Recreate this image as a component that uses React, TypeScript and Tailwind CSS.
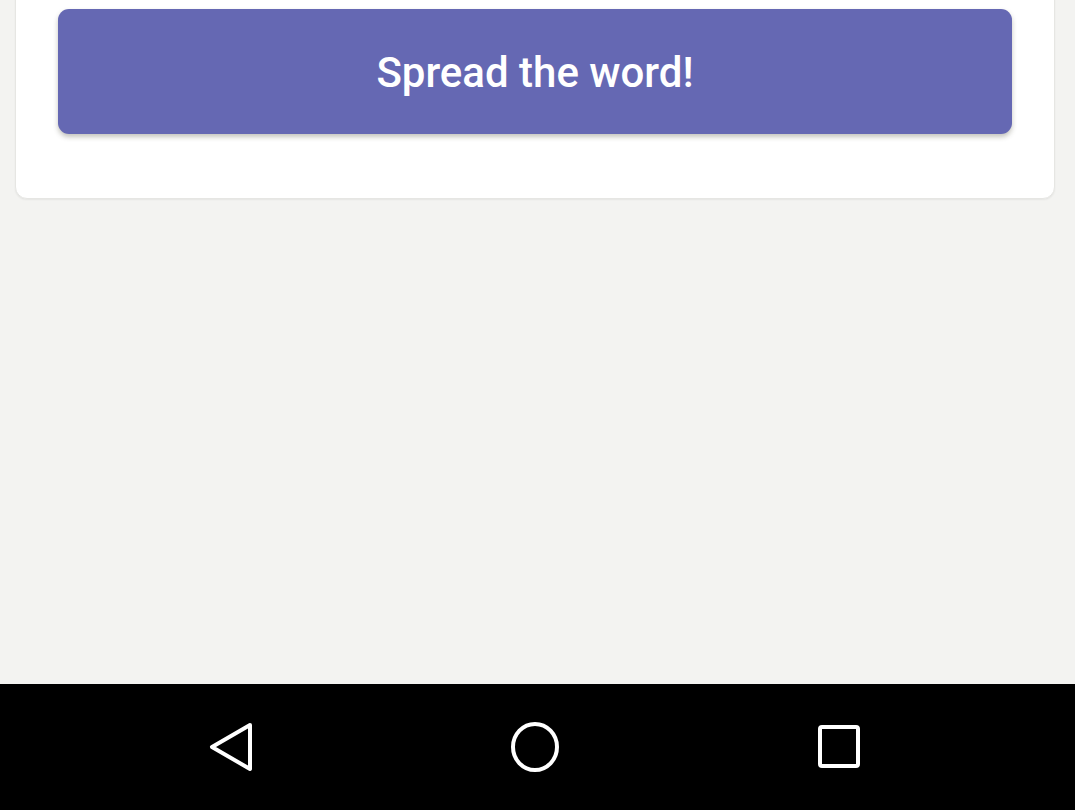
const NavBack = () => (
  <svg width="46" height="50" viewBox="0 0 46 50" fill="none">
    <path d="M42 3 L4 25 L42 47 Z" stroke="white" strokeWidth="4" strokeLinejoin="round" />
  </svg>
);

const NavHome = () => (
  <svg width="50" height="52" viewBox="0 0 50 52" fill="none">
    <ellipse cx="25" cy="26" rx="22" ry="23" stroke="white" strokeWidth="4" />
  </svg>
);

const NavRecents = () => (
  <svg width="46" height="46" viewBox="0 0 46 46" fill="none">
    <rect x="4" y="3" width="38" height="39" rx="2" stroke="white" strokeWidth="4" />
  </svg>
);

export default function App() {
  return (
    <div className="w-[1075px] h-[810px] flex flex-col bg-[#f3f3f1] overflow-hidden" style={{ fontFamily: 'Roboto, "Noto Sans", sans-serif' }}>
      <div className="flex-1 px-[15px] pr-[20px]">
        {/* share card, top cut off by the viewport */}
        <div className="-mt-[20px] pt-[28px] pb-[64px] px-[42px] bg-white rounded-b-[12px] border border-[#e6e6e3] shadow-[0_1px_2px_rgba(0,0,0,0.06)]">
          <button className="w-full h-[125px] pt-[2px] rounded-[11px] bg-[#6568b3] text-white text-[42px] font-medium shadow-[0_3px_5px_rgba(60,60,40,0.3)]">
            Spread the word!
          </button>
        </div>
      </div>

      <div className="h-[126px] bg-black flex items-center justify-center gap-[256px] pr-[6px]">
        <NavBack />
        <NavHome />
        <NavRecents />
      </div>
    </div>
  );
}
